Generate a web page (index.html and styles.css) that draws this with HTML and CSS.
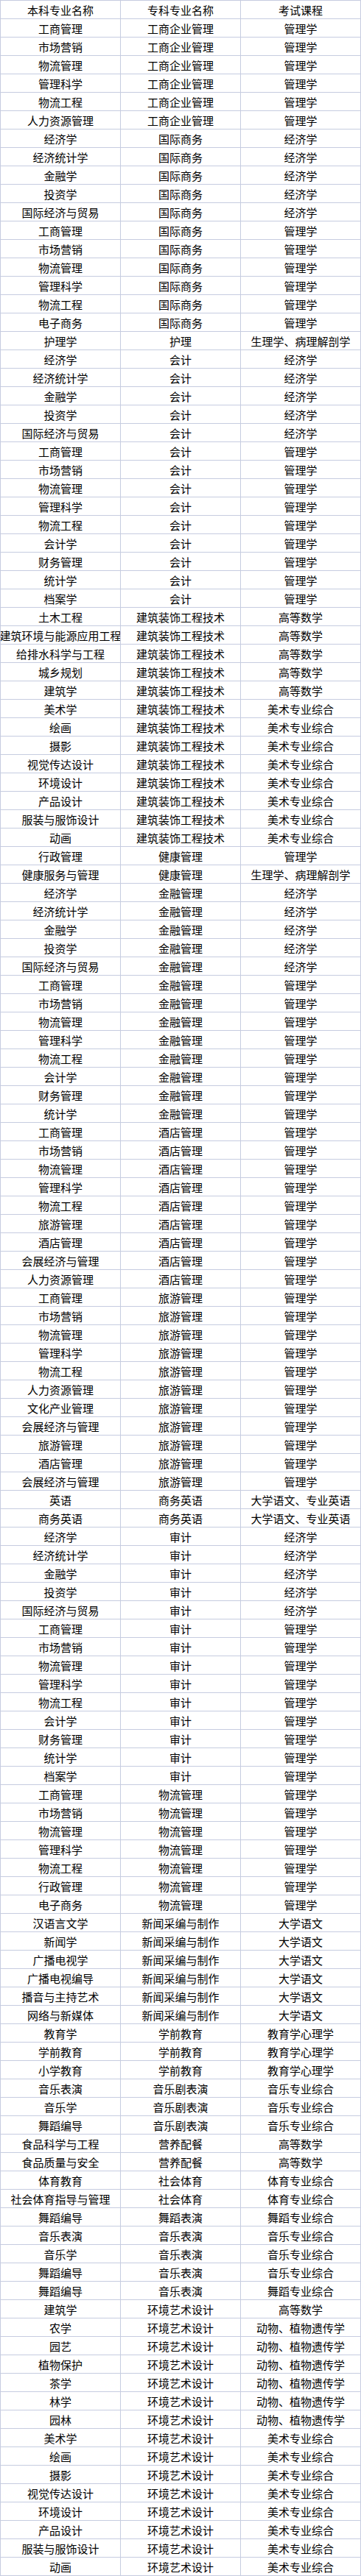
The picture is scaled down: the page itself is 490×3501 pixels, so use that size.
FILE: index.html
```html
<!DOCTYPE html>
<html lang="zh-CN">
<head>
<meta charset="utf-8">
<title>专业对照表</title>
<link rel="stylesheet" href="styles.css">
</head>
<body>
<div class="grid">
<div class="c">本科专业名称</div><div class="c">专科专业名称</div><div class="c">考试课程</div>
<div class="c">工商管理</div><div class="c">工商企业管理</div><div class="c">管理学</div>
<div class="c">市场营销</div><div class="c">工商企业管理</div><div class="c">管理学</div>
<div class="c">物流管理</div><div class="c">工商企业管理</div><div class="c">管理学</div>
<div class="c">管理科学</div><div class="c">工商企业管理</div><div class="c">管理学</div>
<div class="c">物流工程</div><div class="c">工商企业管理</div><div class="c">管理学</div>
<div class="c">人力资源管理</div><div class="c">工商企业管理</div><div class="c">管理学</div>
<div class="c">经济学</div><div class="c">国际商务</div><div class="c">经济学</div>
<div class="c">经济统计学</div><div class="c">国际商务</div><div class="c">经济学</div>
<div class="c">金融学</div><div class="c">国际商务</div><div class="c">经济学</div>
<div class="c">投资学</div><div class="c">国际商务</div><div class="c">经济学</div>
<div class="c">国际经济与贸易</div><div class="c">国际商务</div><div class="c">经济学</div>
<div class="c">工商管理</div><div class="c">国际商务</div><div class="c">管理学</div>
<div class="c">市场营销</div><div class="c">国际商务</div><div class="c">管理学</div>
<div class="c">物流管理</div><div class="c">国际商务</div><div class="c">管理学</div>
<div class="c">管理科学</div><div class="c">国际商务</div><div class="c">管理学</div>
<div class="c">物流工程</div><div class="c">国际商务</div><div class="c">管理学</div>
<div class="c">电子商务</div><div class="c">国际商务</div><div class="c">管理学</div>
<div class="c">护理学</div><div class="c">护理</div><div class="c">生理学、病理解剖学</div>
<div class="c">经济学</div><div class="c">会计</div><div class="c">经济学</div>
<div class="c">经济统计学</div><div class="c">会计</div><div class="c">经济学</div>
<div class="c">金融学</div><div class="c">会计</div><div class="c">经济学</div>
<div class="c">投资学</div><div class="c">会计</div><div class="c">经济学</div>
<div class="c">国际经济与贸易</div><div class="c">会计</div><div class="c">经济学</div>
<div class="c">工商管理</div><div class="c">会计</div><div class="c">管理学</div>
<div class="c">市场营销</div><div class="c">会计</div><div class="c">管理学</div>
<div class="c">物流管理</div><div class="c">会计</div><div class="c">管理学</div>
<div class="c">管理科学</div><div class="c">会计</div><div class="c">管理学</div>
<div class="c">物流工程</div><div class="c">会计</div><div class="c">管理学</div>
<div class="c">会计学</div><div class="c">会计</div><div class="c">管理学</div>
<div class="c">财务管理</div><div class="c">会计</div><div class="c">管理学</div>
<div class="c">统计学</div><div class="c">会计</div><div class="c">管理学</div>
<div class="c">档案学</div><div class="c">会计</div><div class="c">管理学</div>
<div class="c">土木工程</div><div class="c">建筑装饰工程技术</div><div class="c">高等数学</div>
<div class="c">建筑环境与能源应用工程</div><div class="c">建筑装饰工程技术</div><div class="c">高等数学</div>
<div class="c">给排水科学与工程</div><div class="c">建筑装饰工程技术</div><div class="c">高等数学</div>
<div class="c">城乡规划</div><div class="c">建筑装饰工程技术</div><div class="c">高等数学</div>
<div class="c">建筑学</div><div class="c">建筑装饰工程技术</div><div class="c">高等数学</div>
<div class="c">美术学</div><div class="c">建筑装饰工程技术</div><div class="c">美术专业综合</div>
<div class="c">绘画</div><div class="c">建筑装饰工程技术</div><div class="c">美术专业综合</div>
<div class="c">摄影</div><div class="c">建筑装饰工程技术</div><div class="c">美术专业综合</div>
<div class="c">视觉传达设计</div><div class="c">建筑装饰工程技术</div><div class="c">美术专业综合</div>
<div class="c">环境设计</div><div class="c">建筑装饰工程技术</div><div class="c">美术专业综合</div>
<div class="c">产品设计</div><div class="c">建筑装饰工程技术</div><div class="c">美术专业综合</div>
<div class="c">服装与服饰设计</div><div class="c">建筑装饰工程技术</div><div class="c">美术专业综合</div>
<div class="c">动画</div><div class="c">建筑装饰工程技术</div><div class="c">美术专业综合</div>
<div class="c">行政管理</div><div class="c">健康管理</div><div class="c">管理学</div>
<div class="c">健康服务与管理</div><div class="c">健康管理</div><div class="c">生理学、病理解剖学</div>
<div class="c">经济学</div><div class="c">金融管理</div><div class="c">经济学</div>
<div class="c">经济统计学</div><div class="c">金融管理</div><div class="c">经济学</div>
<div class="c">金融学</div><div class="c">金融管理</div><div class="c">经济学</div>
<div class="c">投资学</div><div class="c">金融管理</div><div class="c">经济学</div>
<div class="c">国际经济与贸易</div><div class="c">金融管理</div><div class="c">经济学</div>
<div class="c">工商管理</div><div class="c">金融管理</div><div class="c">管理学</div>
<div class="c">市场营销</div><div class="c">金融管理</div><div class="c">管理学</div>
<div class="c">物流管理</div><div class="c">金融管理</div><div class="c">管理学</div>
<div class="c">管理科学</div><div class="c">金融管理</div><div class="c">管理学</div>
<div class="c">物流工程</div><div class="c">金融管理</div><div class="c">管理学</div>
<div class="c">会计学</div><div class="c">金融管理</div><div class="c">管理学</div>
<div class="c">财务管理</div><div class="c">金融管理</div><div class="c">管理学</div>
<div class="c">统计学</div><div class="c">金融管理</div><div class="c">管理学</div>
<div class="c">工商管理</div><div class="c">酒店管理</div><div class="c">管理学</div>
<div class="c">市场营销</div><div class="c">酒店管理</div><div class="c">管理学</div>
<div class="c">物流管理</div><div class="c">酒店管理</div><div class="c">管理学</div>
<div class="c">管理科学</div><div class="c">酒店管理</div><div class="c">管理学</div>
<div class="c">物流工程</div><div class="c">酒店管理</div><div class="c">管理学</div>
<div class="c">旅游管理</div><div class="c">酒店管理</div><div class="c">管理学</div>
<div class="c">酒店管理</div><div class="c">酒店管理</div><div class="c">管理学</div>
<div class="c">会展经济与管理</div><div class="c">酒店管理</div><div class="c">管理学</div>
<div class="c">人力资源管理</div><div class="c">酒店管理</div><div class="c">管理学</div>
<div class="c">工商管理</div><div class="c">旅游管理</div><div class="c">管理学</div>
<div class="c">市场营销</div><div class="c">旅游管理</div><div class="c">管理学</div>
<div class="c">物流管理</div><div class="c">旅游管理</div><div class="c">管理学</div>
<div class="c">管理科学</div><div class="c">旅游管理</div><div class="c">管理学</div>
<div class="c">物流工程</div><div class="c">旅游管理</div><div class="c">管理学</div>
<div class="c">人力资源管理</div><div class="c">旅游管理</div><div class="c">管理学</div>
<div class="c">文化产业管理</div><div class="c">旅游管理</div><div class="c">管理学</div>
<div class="c">会展经济与管理</div><div class="c">旅游管理</div><div class="c">管理学</div>
<div class="c">旅游管理</div><div class="c">旅游管理</div><div class="c">管理学</div>
<div class="c">酒店管理</div><div class="c">旅游管理</div><div class="c">管理学</div>
<div class="c">会展经济与管理</div><div class="c">旅游管理</div><div class="c">管理学</div>
<div class="c">英语</div><div class="c">商务英语</div><div class="c">大学语文、专业英语</div>
<div class="c">商务英语</div><div class="c">商务英语</div><div class="c">大学语文、专业英语</div>
<div class="c">经济学</div><div class="c">审计</div><div class="c">经济学</div>
<div class="c">经济统计学</div><div class="c">审计</div><div class="c">经济学</div>
<div class="c">金融学</div><div class="c">审计</div><div class="c">经济学</div>
<div class="c">投资学</div><div class="c">审计</div><div class="c">经济学</div>
<div class="c">国际经济与贸易</div><div class="c">审计</div><div class="c">经济学</div>
<div class="c">工商管理</div><div class="c">审计</div><div class="c">管理学</div>
<div class="c">市场营销</div><div class="c">审计</div><div class="c">管理学</div>
<div class="c">物流管理</div><div class="c">审计</div><div class="c">管理学</div>
<div class="c">管理科学</div><div class="c">审计</div><div class="c">管理学</div>
<div class="c">物流工程</div><div class="c">审计</div><div class="c">管理学</div>
<div class="c">会计学</div><div class="c">审计</div><div class="c">管理学</div>
<div class="c">财务管理</div><div class="c">审计</div><div class="c">管理学</div>
<div class="c">统计学</div><div class="c">审计</div><div class="c">管理学</div>
<div class="c">档案学</div><div class="c">审计</div><div class="c">管理学</div>
<div class="c">工商管理</div><div class="c">物流管理</div><div class="c">管理学</div>
<div class="c">市场营销</div><div class="c">物流管理</div><div class="c">管理学</div>
<div class="c">物流管理</div><div class="c">物流管理</div><div class="c">管理学</div>
<div class="c">管理科学</div><div class="c">物流管理</div><div class="c">管理学</div>
<div class="c">物流工程</div><div class="c">物流管理</div><div class="c">管理学</div>
<div class="c">行政管理</div><div class="c">物流管理</div><div class="c">管理学</div>
<div class="c">电子商务</div><div class="c">物流管理</div><div class="c">管理学</div>
<div class="c">汉语言文学</div><div class="c">新闻采编与制作</div><div class="c">大学语文</div>
<div class="c">新闻学</div><div class="c">新闻采编与制作</div><div class="c">大学语文</div>
<div class="c">广播电视学</div><div class="c">新闻采编与制作</div><div class="c">大学语文</div>
<div class="c">广播电视编导</div><div class="c">新闻采编与制作</div><div class="c">大学语文</div>
<div class="c">播音与主持艺术</div><div class="c">新闻采编与制作</div><div class="c">大学语文</div>
<div class="c">网络与新媒体</div><div class="c">新闻采编与制作</div><div class="c">大学语文</div>
<div class="c">教育学</div><div class="c">学前教育</div><div class="c">教育学心理学</div>
<div class="c">学前教育</div><div class="c">学前教育</div><div class="c">教育学心理学</div>
<div class="c">小学教育</div><div class="c">学前教育</div><div class="c">教育学心理学</div>
<div class="c">音乐表演</div><div class="c">音乐剧表演</div><div class="c">音乐专业综合</div>
<div class="c">音乐学</div><div class="c">音乐剧表演</div><div class="c">音乐专业综合</div>
<div class="c">舞蹈编导</div><div class="c">音乐剧表演</div><div class="c">音乐专业综合</div>
<div class="c">食品科学与工程</div><div class="c">营养配餐</div><div class="c">高等数学</div>
<div class="c">食品质量与安全</div><div class="c">营养配餐</div><div class="c">高等数学</div>
<div class="c">体育教育</div><div class="c">社会体育</div><div class="c">体育专业综合</div>
<div class="c">社会体育指导与管理</div><div class="c">社会体育</div><div class="c">体育专业综合</div>
<div class="c">舞蹈编导</div><div class="c">舞蹈表演</div><div class="c">舞蹈专业综合</div>
<div class="c">音乐表演</div><div class="c">音乐表演</div><div class="c">音乐专业综合</div>
<div class="c">音乐学</div><div class="c">音乐表演</div><div class="c">音乐专业综合</div>
<div class="c">舞蹈编导</div><div class="c">音乐表演</div><div class="c">音乐专业综合</div>
<div class="c">舞蹈编导</div><div class="c">音乐表演</div><div class="c">舞蹈专业综合</div>
<div class="c">建筑学</div><div class="c">环境艺术设计</div><div class="c">高等数学</div>
<div class="c">农学</div><div class="c">环境艺术设计</div><div class="c">动物、植物遗传学</div>
<div class="c">园艺</div><div class="c">环境艺术设计</div><div class="c">动物、植物遗传学</div>
<div class="c">植物保护</div><div class="c">环境艺术设计</div><div class="c">动物、植物遗传学</div>
<div class="c">茶学</div><div class="c">环境艺术设计</div><div class="c">动物、植物遗传学</div>
<div class="c">林学</div><div class="c">环境艺术设计</div><div class="c">动物、植物遗传学</div>
<div class="c">园林</div><div class="c">环境艺术设计</div><div class="c">动物、植物遗传学</div>
<div class="c">美术学</div><div class="c">环境艺术设计</div><div class="c">美术专业综合</div>
<div class="c">绘画</div><div class="c">环境艺术设计</div><div class="c">美术专业综合</div>
<div class="c">摄影</div><div class="c">环境艺术设计</div><div class="c">美术专业综合</div>
<div class="c">视觉传达设计</div><div class="c">环境艺术设计</div><div class="c">美术专业综合</div>
<div class="c">环境设计</div><div class="c">环境艺术设计</div><div class="c">美术专业综合</div>
<div class="c">产品设计</div><div class="c">环境艺术设计</div><div class="c">美术专业综合</div>
<div class="c">服装与服饰设计</div><div class="c">环境艺术设计</div><div class="c">美术专业综合</div>
<div class="c">动画</div><div class="c">环境艺术设计</div><div class="c">美术专业综合</div>
</div>
</body>
</html>
```

FILE: styles.css
```css
html, body {
  margin: 0;
  padding: 0;
  background: #ffffff;
}

.grid {
  display: grid;
  grid-template-columns: 163px 163px 163px;
  grid-auto-rows: 25px;
  width: 490px;
  box-sizing: border-box;
  border-left: 1px solid #c6cce0;
  border-top: 1px solid #c6cce0;
  font-family: "Noto Sans CJK SC", "Noto Sans", sans-serif;
  font-size: 15px;
  color: #000000;
}

.c {
  box-sizing: border-box;
  border-right: 1px solid #c6cce0;
  border-bottom: 1px solid #c6cce0;
  display: flex;
  align-items: center;
  justify-content: center;
  white-space: nowrap;
  overflow: hidden;
  line-height: 1;
}
```
